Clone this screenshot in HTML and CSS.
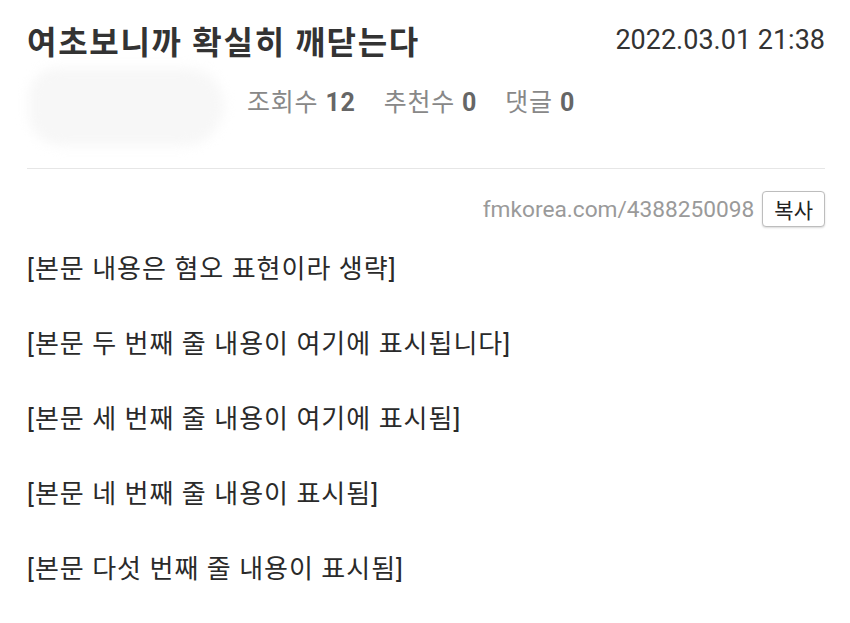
FILE: index.html
```html
<!DOCTYPE html>
<html lang="ko">
<head>
<meta charset="utf-8">
<link rel="stylesheet" href="styles.css">
</head>
<body>
<div class="page">
  <div class="header">
    <h1 class="title">여초보니까 확실히 깨닫는다</h1>
    <span class="date">2022.03.01 21:38</span>
  </div>
  <div class="meta">
    <div class="author"><div class="blur"></div></div>
    <span class="stat">조회수 <b>12</b></span>
    <span class="stat">추천수 <b>0</b></span>
    <span class="stat">댓글 <b>0</b></span>
  </div>
  <div class="divider"></div>
  <div class="linkrow">
    <span class="url">fmkorea.com/4388250098</span>
    <button class="copy">복사</button>
  </div>
  <div class="content">
    <p>[본문 내용은 혐오 표현이라 생략]</p>
    <p>[본문 두 번째 줄 내용이 여기에 표시됩니다]</p>
    <p>[본문 세 번째 줄 내용이 여기에 표시됨]</p>
    <p>[본문 네 번째 줄 내용이 표시됨]</p>
    <p>[본문 다섯 번째 줄 내용이 표시됨]</p>
  </div>
</div>
</body>
</html>
```
FILE: styles.css
```css
html, body {
  margin: 0;
  padding: 0;
  background: #ffffff;
}
body {
  font-family: Roboto, "Noto Sans CJK KR", sans-serif;
  color: #333333;
}
.page {
  padding: 0 25px 0 27px;
}
.header {
  display: flex;
  justify-content: space-between;
  align-items: center;
  padding-top: 18px;
  height: 44px;
}
.title {
  margin: 0;
  font-size: 32px;
  font-weight: 700;
  color: #333333;
  letter-spacing: 1.7px;
}
.date {
  font-size: 27px;
  color: #333333;
}
.meta {
  display: flex;
  align-items: center;
  height: 76px;
  padding-bottom: 30px;
}
.author {
  width: 220px;
  height: 80px;
  display: flex;
  align-items: center;
}
.blur {
  width: 195px;
  height: 78px;
  margin-top: 14px;
  margin-left: 2px;
  background: #f7f7f7;
  border-radius: 30px 40px 45px 35px;
  filter: blur(6px);
}
.stat {
  font-size: 25px;
  letter-spacing: 0.8px;
  color: #888888;
  margin-right: 28px;
}
.stat b {
  color: #666666;
  font-weight: 700;
}
.divider {
  height: 1px;
  background: #e6e6e6;
}
.linkrow {
  display: flex;
  justify-content: flex-end;
  align-items: center;
  margin-top: 22px;
}
.url {
  font-size: 22.7px;
  color: #9a9a9a;
  margin-right: 8px;
}
.copy {
  font-family: Roboto, "Noto Sans CJK KR", sans-serif;
  font-size: 21px;
  color: #222222;
  background: #ffffff;
  border: 1px solid #bdbdbd;
  border-radius: 4px;
  padding: 2px 11px;
  height: 36px;
  box-shadow: 0 1px 2px rgba(0,0,0,0.15);
}
.content {
  margin-top: 18px;
}
.content p {
  margin: 0;
  height: 75px;
  line-height: 48px;
  font-size: 26px;
  letter-spacing: 1px;
  color: #2a2a2a;
}
```
